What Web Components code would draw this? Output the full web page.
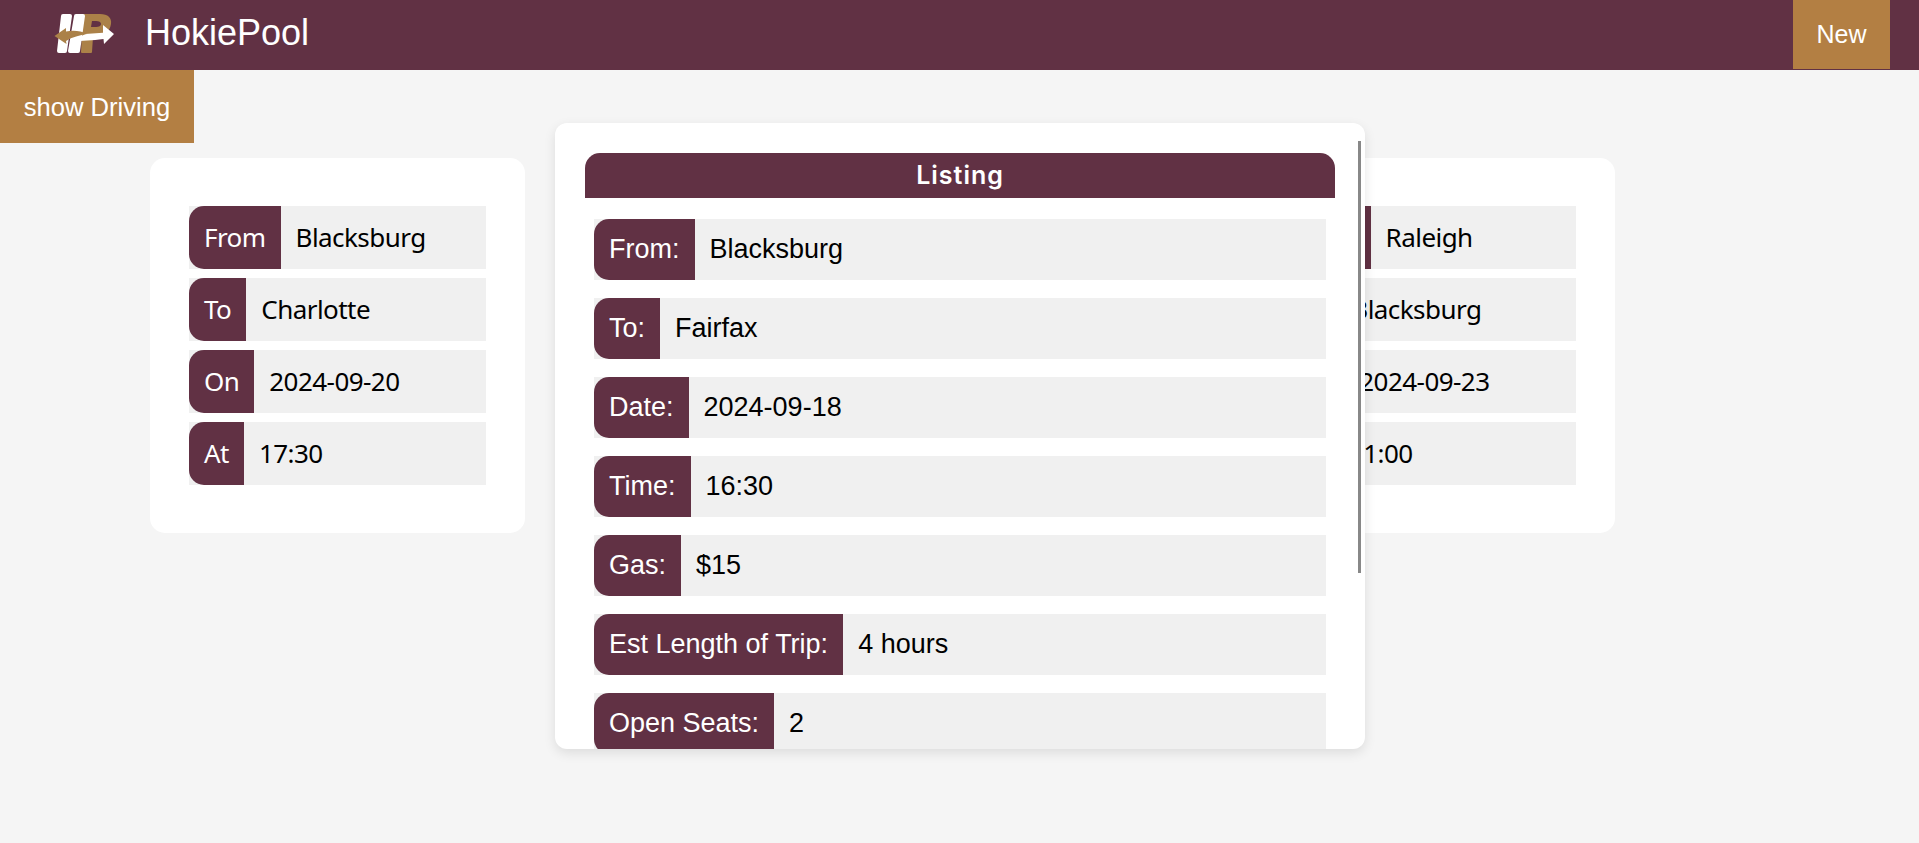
<!DOCTYPE html>
<html>
<head>
<meta charset="utf-8">
<title>HokiePool</title>
<style>
  html, body { margin: 0; height: 100%; overflow: hidden; background: #f5f5f5; }
  body { font-family: "Liberation Sans", Arial, sans-serif; }
</style>
</head>
<body>
<hoo-nav></hoo-nav>
<hoo-main>
  <ride-card slot="left">
    <ride-field label="From" value="Blacksburg"></ride-field>
    <ride-field label="To" value="Charlotte"></ride-field>
    <ride-field label="On" value="2024-09-20"></ride-field>
    <ride-field label="At" value="17:30"></ride-field>
  </ride-card>
  <listing-card slot="center" title="Listing">
    <listing-field label="From:" value="Blacksburg"></listing-field>
    <listing-field label="To:" value="Fairfax"></listing-field>
    <listing-field label="Date:" value="2024-09-18"></listing-field>
    <listing-field label="Time:" value="16:30"></listing-field>
    <listing-field label="Gas:" value="$15"></listing-field>
    <listing-field label="Est Length of Trip:" value="4 hours"></listing-field>
    <listing-field label="Open Seats:" value="2"></listing-field>
  </listing-card>
  <ride-card slot="right">
    <ride-field label="From" value="Raleigh"></ride-field>
    <ride-field label="To" value="Blacksburg"></ride-field>
    <ride-field label="On" value="2024-09-23"></ride-field>
    <ride-field label="At" value="11:00"></ride-field>
  </ride-card>
</hoo-main>
<script>
class HooNav extends HTMLElement {
  static body = `<style>
    :host { display: flex; align-items: stretch; height: 70px; background: #613144; color: #fff; }
    .brand { display: flex; align-items: center; padding-left: 54px; flex: 1; }
    svg { display: block; width: 60px; height: 40px; margin-top: -4px; }
    .name { font-size: 36px; margin: 0 0 4px 31px; }
    .new { width: 97px; height: 69px; margin-right: 29px; background: #b37f43; display: flex;
      align-items: center; justify-content: center; font-size: 25px; }
  </style>
  <div class="brand">
    <svg viewBox="0 0 60 40">
      <path fill="#ab8148" fill-rule="evenodd" d="M29 1h17c8 0 12 4 11 10-1 8-8 13-18 13l-1 15q0 1-1 1H28q-1 0-1-1zM38 8l-1 6h5c3 0 5-1 5-3s-2-3-5-3z"/>
      <path fill="#fff" d="M7 3q0-2 2-2h7q2 0 2 2L13 38q0 2-2 2H5q-2 0-2-2zM20 3q0-2 2-2h7q2 0 2 2L26 38q0 2-2 2h-8q-2 0-2-2z"/>
      <path fill="#fff" d="M31 21 49 19.7 49 12 60 21 50 31 49.5 26C38 28 28 27 18 29z"/>
      <path fill="#ab8148" d="M.5 23 12 15v3.5C20 17 27 18 33 21 26 22 18 24 12 28l.5 3z"/>
    </svg>
    <div class="name">HokiePool</div>
  </div>
  <div class="new">New</div>`

  constructor() {
    super()
    this.attachShadow({mode: 'open'})
    this.shadowRoot.innerHTML = HooNav.body
  }
}

class HooMain extends HTMLElement {
  static body = `<style>
    :host { display: block; }
    .toggle { width: 194px; height: 73px; background: #b37f43; color: #fff; display: flex;
      align-items: center; justify-content: center; font-size: 25.6px; position: relative; }
    .toggle span { padding-top: 2px; }
    .stage { display: flex; align-items: flex-start; padding-left: 150px; margin-top: -20px; }
    .left { margin: 35px 30px 0 0; }
    .center { position: relative; z-index: 1; margin-right: -125px; }
    .right { margin-top: 35px; }
  </style>
  <div class="toggle"><span>show Driving</span></div>
  <div class="stage">
    <div class="left"><slot name="left"></slot></div>
    <div class="center"><slot name="center"></slot></div>
    <div class="right"><slot name="right"></slot></div>
  </div>`

  constructor() {
    super()
    this.attachShadow({mode: 'open'})
    this.shadowRoot.innerHTML = HooMain.body
  }
}

class RideCard extends HTMLElement {
  static body = `<style>
    :host { display: flex; flex-direction: column; gap: 9px; box-sizing: border-box; width: 375px;
      height: 375px; padding: 48px 39px; background: #fff; border-radius: 15px; }
  </style>
  <slot></slot>`

  constructor() {
    super()
    this.attachShadow({mode: 'open'})
    this.shadowRoot.innerHTML = RideCard.body
  }
}

class RideField extends HTMLElement {
  static body = `<style>
    :host { display: flex; height: 63px; background: #f0f0f0; font-family: "Noto Sans", sans-serif;
      font-size: 26px; letter-spacing: -0.55px; color: #000; }
    .label { display: flex; align-items: center; box-sizing: border-box; padding: 0 15px 2px; background: #613144;
      color: #fff; border-radius: 15px 0 0 15px; }
    .value { display: flex; align-items: center; padding: 0 0 2px 15px; }
  </style>
  <div class="label"></div>
  <div class="value"></div>`

  constructor() {
    super()
    this.attachShadow({mode: 'open'})
    this.shadowRoot.innerHTML = RideField.body
  }

  connectedCallback() {
    this.shadowRoot.querySelector('.label').innerText = this.getAttribute('label')
    this.shadowRoot.querySelector('.value').innerText = this.getAttribute('value')
  }
}

class ListingCard extends HTMLElement {
  static body = `<style>
    :host { display: block; position: relative; box-sizing: border-box; width: 810px; height: 626px;
      padding: 30px 30px 0; background: #fff; border-radius: 12px; overflow: hidden;
      box-shadow: 0 4px 12px rgba(0, 0, 0, 0.1); }
    .title { height: 45px; box-sizing: border-box; padding-bottom: 2px; display: flex; align-items: center;
      justify-content: center; background: #613144; color: #fff; border-radius: 15px 15px 0 0;
      font-family: Inter, sans-serif; font-weight: 600; font-size: 25px; letter-spacing: 1px; }
    .rows { display: flex; flex-direction: column; gap: 18px; padding: 21px 9px 0; }
    .thumb { position: absolute; top: 18px; right: 4px; width: 3px; height: 432px; background: #888; }
  </style>
  <div class="title"></div>
  <div class="rows"><slot></slot></div>
  <div class="thumb"></div>`

  constructor() {
    super()
    this.attachShadow({mode: 'open'})
    this.shadowRoot.innerHTML = ListingCard.body
  }

  connectedCallback() {
    this.shadowRoot.querySelector('.title').innerText = this.getAttribute('title')
  }
}

class ListingField extends HTMLElement {
  static body = `<style>
    :host { display: flex; flex: none; height: 61px; background: #f0f0f0; font-size: 27px; color: #000; }
    .label { display: flex; align-items: center; padding: 0 15px; background: #613144; color: #fff;
      border-radius: 15px 0 0 15px; }
    .value { display: flex; align-items: center; padding-left: 15px; }
  </style>
  <div class="label"></div>
  <div class="value"></div>`

  constructor() {
    super()
    this.attachShadow({mode: 'open'})
    this.shadowRoot.innerHTML = ListingField.body
  }

  connectedCallback() {
    this.shadowRoot.querySelector('.label').innerText = this.getAttribute('label')
    this.shadowRoot.querySelector('.value').innerText = this.getAttribute('value')
  }
}

customElements.define('hoo-nav', HooNav)
customElements.define('hoo-main', HooMain)
customElements.define('ride-card', RideCard)
customElements.define('ride-field', RideField)
customElements.define('listing-card', ListingCard)
customElements.define('listing-field', ListingField)
</script>
</body>
</html>
